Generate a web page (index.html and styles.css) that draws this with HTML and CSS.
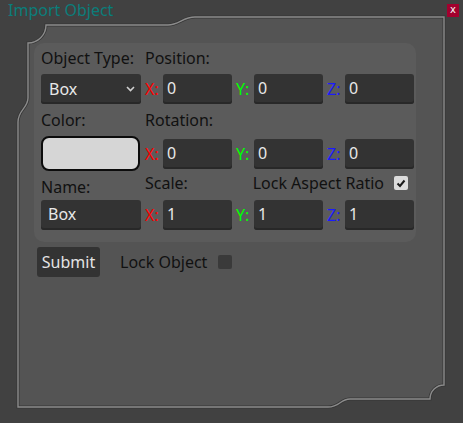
FILE: index.html
```html
<!DOCTYPE html>
<html>
<head>
<meta charset="utf-8">
<link rel="stylesheet" href="styles.css">
</head>
<body>
<div class="window">
  <svg class="frame" width="463" height="423" viewBox="0 0 463 423">
    <path class="frame-shadow" d="M28 43 A18 18 0 0 0 46 25 L168 25 C179 25 183 17 195 17 L444 17 L444 385 A14 14 0 0 0 430 399 L350 399 C340 399 340 407 328 407 L18 407 L18 122 C18 110 28 108 28 98 Z"/>
    <path class="frame-line" d="M28 43 A18 18 0 0 0 46 25 L168 25 C179 25 183 17 195 17 L444 17 L444 385 A14 14 0 0 0 430 399 L350 399 C340 399 340 407 328 407 L18 407 L18 122 C18 110 28 108 28 98 Z"/>
  </svg>
  <header class="titlebar">
    <span class="title">Import Object</span>
    <span class="close">x</span>
  </header>
  <main class="content">
    <section class="group">
      <div class="labels">
        <span class="lbl left">Object Type:</span>
        <span class="lbl">Position:</span>
      </div>
      <div class="controls">
        <div class="select">Box
          <svg class="chev" width="9" height="6" viewBox="0 0 9 6"><polyline points="1,1 4.5,4.5 8,1"/></svg>
        </div>
        <div class="cell"><span class="ax ax-x">X:</span><div class="field">0</div></div>
        <div class="cell"><span class="ax ax-y">Y:</span><div class="field">0</div></div>
        <div class="cell"><span class="ax ax-z">Z:</span><div class="field">0</div></div>
      </div>

      <div class="labels">
        <span class="lbl left">Color:</span>
        <span class="lbl">Rotation:</span>
      </div>
      <div class="controls tall">
        <div class="swatch"></div>
        <div class="cell"><span class="ax ax-x">X:</span><div class="field">0</div></div>
        <div class="cell"><span class="ax ax-y">Y:</span><div class="field">0</div></div>
        <div class="cell"><span class="ax ax-z">Z:</span><div class="field">0</div></div>
      </div>

      <div class="labels">
        <span class="lbl left lower">Name:</span>
        <span class="lbl">Scale:</span>
        <span class="lock">
          <span class="lbl">Lock Aspect Ratio</span>
          <span class="check on">
            <svg width="10" height="9" viewBox="0 0 10 9"><polyline points="1.5,4.5 4,7 8.5,1.5"/></svg>
          </span>
        </span>
      </div>
      <div class="controls last">
        <div class="field name">Box</div>
        <div class="cell"><span class="ax ax-x">X:</span><div class="field">1</div></div>
        <div class="cell"><span class="ax ax-y">Y:</span><div class="field">1</div></div>
        <div class="cell"><span class="ax ax-z">Z:</span><div class="field">1</div></div>
      </div>
    </section>
    <div class="actions">
      <button class="submit">Submit</button>
      <span class="lbl">Lock Object</span>
      <span class="check off"></span>
    </div>
  </main>
</div>
</body>
</html>
```
FILE: styles.css
```css
* { box-sizing: border-box; }
html, body {
  margin: 0;
  padding: 0;
  background: #414141;
}
body {
  font-family: "Noto Sans", "Open Sans", sans-serif;
  font-size: 16px;
}
.window {
  position: relative;
  width: 463px;
  height: 423px;
  overflow: hidden;
}
.frame {
  position: absolute;
  left: 0;
  top: 0;
}
.frame-shadow {
  fill: #545454;
  stroke: #363636;
  stroke-width: 3;
}
.frame-line {
  fill: none;
  stroke: #8c8c8c;
  stroke-width: 1.4;
}
.titlebar {
  position: relative;
  height: 18px;
  display: flex;
  justify-content: space-between;
  align-items: flex-start;
  padding: 0 4px 0 8px;
}
.title {
  color: #0b7d7a;
  line-height: 20px;
  height: 18px;
}
.close {
  margin-top: 4px;
  width: 12px;
  height: 13px;
  background: #a3002e;
  color: #f4f4f4;
  font-size: 10px;
  line-height: 12px;
  text-align: center;
  font-family: "DejaVu Sans", sans-serif;
}
.content {
  position: relative;
  padding: 25px 0 0 34px;
}
.group {
  width: 382px;
  height: 199px;
  background: #5b5b5b;
  border-radius: 10px;
  padding: 5px 2px 0 7px;
}
.labels {
  display: flex;
  height: 20px;
  align-items: flex-start;
}
.lbl {
  color: #111111;
  line-height: 20px;
  white-space: nowrap;
}
.lbl.left {
  width: 104px;
}
.lbl.lower {
  margin-top: 4px;
}
.lock {
  margin-left: auto;
  margin-right: 6px;
  display: flex;
  align-items: center;
  gap: 10px;
}
.controls {
  display: flex;
  gap: 4px;
  align-items: center;
  margin-top: 6px;
  margin-bottom: 6px;
}
.controls.tall {
  height: 35px;
  margin-bottom: 2px;
}
.controls.last {
  margin-top: 7px;
  margin-bottom: 0;
}
.cell {
  display: flex;
  align-items: center;
  width: 87px;
}
.ax {
  width: 18px;
  line-height: 20px;
}
.ax-x { color: #ff0000; }
.ax-y { color: #00ff00; }
.ax-z { color: #1a1aff; }
.field, .select {
  height: 30px;
  background: #333333;
  border-radius: 3px;
  box-shadow: inset 0 -2px 0 #282828;
  color: #e8e8e8;
  line-height: 29px;
  padding-left: 4px;
}
.field {
  width: 69px;
}
.field.name {
  width: 100px;
  padding-left: 7px;
}
.select {
  width: 100px;
  padding-left: 8px;
  display: flex;
  align-items: center;
  justify-content: space-between;
  padding-right: 6px;
}
.chev polyline {
  fill: none;
  stroke: #d0d0d0;
  stroke-width: 1.6;
}
.swatch {
  width: 99px;
  height: 35px;
  background: #d6d6d6;
  border: 2px solid #0c0c0c;
  border-radius: 8px;
  margin-right: 1px;
}
.check {
  width: 14px;
  height: 14px;
  border-radius: 2px;
  display: flex;
  align-items: center;
  justify-content: center;
}
.check.on {
  background: #dcdcdc;
}
.check.on polyline {
  fill: none;
  stroke: #1a1a1a;
  stroke-width: 2;
}
.check.off {
  background: #3a3a3a;
}
.actions {
  display: flex;
  align-items: center;
  margin: 5px 0 0 3px;
}
.submit {
  width: 63px;
  height: 30px;
  background: #333333;
  border: none;
  border-radius: 3px;
  color: #e4e4e4;
  font-family: inherit;
  font-size: 16px;
  padding: 0;
  margin-right: 20px;
}
.actions .lbl {
  margin-right: 11px;
}
```
